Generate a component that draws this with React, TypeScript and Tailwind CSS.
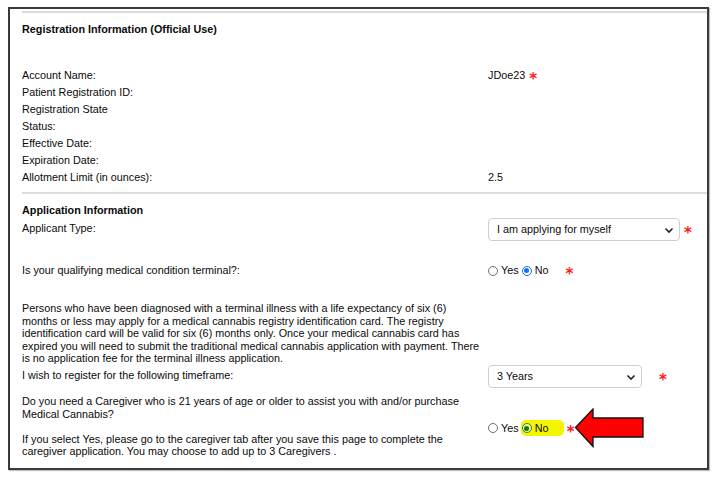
import React from "react";

function Req({ className = "" }: { className?: string }) {
  return (
    <span
      className={`inline-block font-['DejaVu_Sans',sans-serif] text-[15px] font-bold leading-none text-[#ff1a1a] translate-y-[4px] ${className}`}
    >
      *
    </span>
  );
}

function Radio({ state }: { state: "off" | "blue" | "green" }) {
  if (state === "off") {
    return (
      <span className="inline-block h-[10px] w-[10px] shrink-0 rounded-full border border-[#6f6f6f] bg-white" />
    );
  }
  const ring =
    state === "blue" ? "border-[#1a6fe8] bg-white" : "border-[#2f8a1f] bg-[#eef8b0]";
  const dot = state === "blue" ? "bg-[#1a6fe8]" : "bg-[#1f7412]";
  return (
    <span
      className={`flex h-[10px] w-[10px] shrink-0 items-center justify-center rounded-full border-[1.5px] ${ring}`}
    >
      <span className={`h-[5px] w-[5px] rounded-full ${dot}`} />
    </span>
  );
}

function FakeSelect({ value, width }: { value: string; width: string }) {
  return (
    <div
      className={`flex h-[23px] ${width} items-center justify-between rounded-[4px] border border-[#cfcfcf] bg-white pl-[8px] pr-[4px]`}
    >
      <span>{value}</span>
      <svg width="10" height="8" viewBox="0 0 10 8" className="mr-[1px]">
        <path d="M1.5 2.5 L5 6 L8.5 2.5" fill="none" stroke="#222" strokeWidth="1.6" />
      </svg>
    </div>
  );
}

function Row({ label, children }: { label: string; children?: React.ReactNode }) {
  return (
    <div className="flex h-[17px] items-center">
      <div className="w-[466px] shrink-0">{label}</div>
      <div className="flex items-center">{children}</div>
    </div>
  );
}

function Arrow() {
  return (
    <svg width="72" height="41" viewBox="0 0 72 41" className="shrink-0">
      <polygon
        points="1.5,19.5 19,1 19,10 69,10 69,29 19,29 19,38.5"
        fill="#ff0000"
        stroke="#111"
        strokeWidth="1.3"
        strokeLinejoin="miter"
      />
    </svg>
  );
}

export default function App() {
  const officialRows: [string, React.ReactNode][] = [
    [
      "Account Name:",
      <span className="flex items-center gap-[4px]">
        JDoe23 <Req />
      </span>,
    ],
    ["Patient Registration ID:", null],
    ["Registration State", null],
    ["Status:", null],
    ["Effective Date:", null],
    ["Expiration Date:", null],
    ["Allotment Limit (in ounces):", "2.5"],
  ];

  return (
    <div className="min-h-[483px] w-[719px] bg-white pl-[8px] pt-[7px] font-['Liberation_Sans',Arial,sans-serif] text-[10.8px] leading-[12.5px] text-[#0a0a0a]">
      <div className="h-[463px] w-[701px] border-2 border-[#3a3a3a] pl-[12px] shadow-[1px_1px_1px_rgba(0,0,0,0.25)]">
        <div className="mt-[2px] h-[2px] bg-[#dcdcdc]" />

        {/* Registration Information (Official Use) */}
        <div className="flex h-[32px] items-center font-bold">
          Registration Information (Official Use)
        </div>
        <div className="mt-[22px]">
          {officialRows.map(([label, value]) => (
            <Row key={label} label={label}>
              {value}
            </Row>
          ))}
        </div>

        <div className="mt-[6px] h-[2px] bg-[#dcdcdc]" />

        {/* Application Information */}
        <div className="mt-[9px] flex h-[15px] items-center font-bold">
          Application Information
        </div>

        <div className="flex h-[23px]">
          <div className="w-[466px] shrink-0 pt-[4px]">Applicant Type:</div>
          <div className="flex items-center gap-[4px]">
            <FakeSelect value="I am applying for myself" width="w-[192px]" />
            <Req />
          </div>
        </div>

        <div className="mt-[21px]">
          <Row label="Is your qualifying medical condition terminal?:">
            <Radio state="off" />
            <span className="ml-[3px]">Yes</span>
            <span className="ml-[3px]">
              <Radio state="blue" />
            </span>
            <span className="ml-[3px]">No</span>
            <Req className="ml-[17px]" />
          </Row>
        </div>

        <p className="mt-[23px] whitespace-nowrap">
          Persons who have been diagnosed with a terminal illness with a life expectancy of six (6)
          <br />
          months or less may apply for a medical cannabis registry identification card. The registry
          <br />
          identification card will be valid for six (6) months only. Once your medical cannabis card has
          <br />
          expired you will need to submit the traditional medical cannabis application with payment. There
          <br />
          is no application fee for the terminal illness application.
        </p>

        <div className="mt-[0.5px] flex h-[23px]">
          <div className="w-[466px] shrink-0 pt-[4px]">I wish to register for the following timeframe:</div>
          <div className="flex items-center gap-[17px]">
            <FakeSelect value="3 Years" width="w-[154px]" />
            <Req />
          </div>
        </div>

        <div className="mt-[7px] flex">
          <div className="w-[466px] shrink-0 whitespace-nowrap">
            Do you need a Caregiver who is 21 years of age or older to assist you with and/or purchase
            <br />
            Medical Cannabis?
            <br />
            <br />
            If you select Yes, please go to the caregiver tab after you save this page to complete the
            <br />
            caregiver application. You may choose to add up to 3 Caregivers .
          </div>
          <div className="flex items-center pt-[4px]">
            <Radio state="off" />
            <span className="ml-[3px]">Yes</span>
            <span className="ml-[2px] flex h-[16px] w-[43px] items-center rounded-[5px] bg-[#f4f500] pl-[1px]">
              <Radio state="green" />
              <span className="ml-[3px]">No</span>
            </span>
            <Req className="ml-[3px]" />
            <span className="ml-[0px]">
              <Arrow />
            </span>
          </div>
        </div>
      </div>
    </div>
  );
}
